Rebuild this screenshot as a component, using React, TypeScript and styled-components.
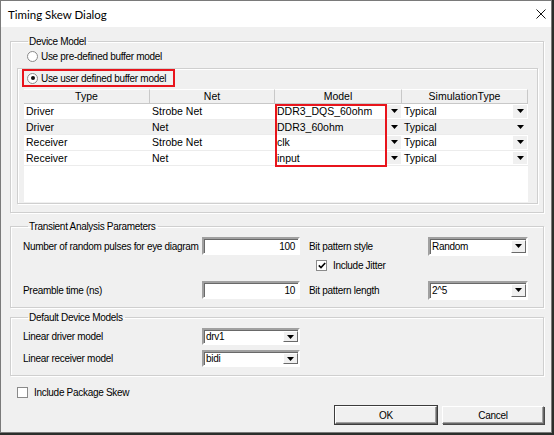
import React from 'react';
import styled, { createGlobalStyle, css } from 'styled-components';

const GlobalStyle = createGlobalStyle`
  html, body {
    margin: 0;
    padding: 0;
    background: #2b2e2b;
  }
  * {
    box-sizing: border-box;
  }
`;

const uiFont = `'Liberation Sans', Arial, sans-serif`;
const titleFont = `Lato, 'Liberation Sans', sans-serif`;

const Window = styled.div`
  width: 552px;
  height: 433px;
  border: 1px solid #7a7a7a;
  background: #f0f0f0;
  display: flex;
  flex-direction: column;
  font-family: ${uiFont};
  font-size: 10px;
  letter-spacing: -0.3px;
  color: #000;
`;

const TitleBar = styled.div`
  height: 26px;
  background: #fff;
  display: flex;
  align-items: center;
  justify-content: space-between;
  padding: 0 5px 0 7px;
  font-family: ${titleFont};
  font-size: 11.5px;
  letter-spacing: 0;
  flex-shrink: 0;
`;

const CloseIcon = () => (
  <svg width="10" height="10" viewBox="0 0 10 10">
    <path d="M0.5 0.5 L9.5 9.5 M9.5 0.5 L0.5 9.5" stroke="#111" strokeWidth="1" />
  </svg>
);

const Body = styled.div`
  flex: 1;
  display: flex;
  flex-direction: column;
  padding: 8px 7px 0 9px;
`;

const etched = css`
  border: 1px solid #cfcfcf;
  box-shadow: inset 1px 1px 0 #fff, 1px 1px 0 #fff;
`;

const Group = styled.fieldset<{ $gap?: number }>`
  ${etched};
  margin: ${({ $gap }) => $gap ?? 0}px 0 0 0;
  padding: 0 5px 8px 12px;
  min-width: 0;
`;

const Legend = styled.legend`
  padding: 0 2px 0 1px;
  margin-left: 5px;
  line-height: 13px;
`;

const RadioRow = styled.label<{ $indent?: number }>`
  display: flex;
  align-items: center;
  gap: 3px;
  height: 17px;
  margin-left: ${({ $indent }) => $indent ?? 0}px;
  cursor: default;
`;

const RadioDot = styled.span<{ $on?: boolean }>`
  width: 11px;
  height: 11px;
  border-radius: 50%;
  border: 1px solid #8a8a8a;
  background: #fff;
  display: flex;
  align-items: center;
  justify-content: center;
  &::after {
    content: '';
    width: 4px;
    height: 4px;
    border-radius: 50%;
    background: ${({ $on }) => ($on ? '#111' : 'transparent')};
  }
`;

const ModelBox = styled.div`
  ${etched};
  margin: 3px 0 0 -6px;
  padding: 0 8px 1px 6px;
  display: flex;
  flex-direction: column;
`;

const Highlight = styled.div`
  align-self: flex-start;
  border: 2px solid #e8141c;
  padding: 0 7px 0 3px;
  margin-left: -2px;
  height: 18px;
  display: flex;
  align-items: center;
`;

const Table = styled.div`
  margin-top: 2px;
  width: 504px;
  height: 113px;
  background: #fff;
  font-size: 10.5px;
  letter-spacing: 0;
  position: relative;
`;

const Row = styled.div<{ $head?: boolean; $shade?: boolean }>`
  display: grid;
  grid-template-columns: 126px 125px 127px 126px;
  height: ${({ $head }) => ($head ? 15 : 15.5)}px;
  background: ${({ $head, $shade }) => ($head || $shade ? '#f0f0f0' : '#fff')};
  border-bottom: 1px solid ${({ $head }) => ($head ? '#c8c8c8' : '#ececec')};
`;

const HeadCell = styled.div`
  display: flex;
  align-items: center;
  justify-content: center;
  border-right: 1px solid #c8c8c8;
  border-top: 1px solid #fff;
  line-height: 1;
`;

const Cell = styled.div`
  display: flex;
  align-items: center;
  padding-left: 2px;
  line-height: 1;
  overflow: hidden;
  white-space: nowrap;
`;

const ComboCell = styled.div`
  display: flex;
  align-items: stretch;
  line-height: 1;
  white-space: nowrap;
`;

const ComboText = styled.div`
  flex: 1;
  display: flex;
  align-items: center;
  padding-left: 2px;
`;

const CellButton = styled.div`
  width: 14px;
  background: #f0f0f0;
  display: flex;
  align-items: center;
  justify-content: center;
  margin: 1px 1px 1px 0;
`;

const Arrow = () => (
  <svg width="7" height="4" viewBox="0 0 7 4">
    <path d="M0 0 H7 L3.5 4 Z" fill="#000" />
  </svg>
);

const ModelMark = styled.div`
  position: absolute;
  left: 251px;
  top: 15px;
  width: 112px;
  height: 63px;
  border: 2px solid #e8141c;
  pointer-events: none;
`;

const Form = styled.div<{ $rows: string; $rowGap?: number }>`
  display: grid;
  grid-template-columns: 179px 98px 128px 100px;
  grid-template-rows: ${({ $rows }) => $rows};
  row-gap: ${({ $rowGap }) => $rowGap ?? 0}px;
  align-items: center;
  margin-top: 4px;
`;

const Label = styled.div<{ $indent?: number }>`
  padding-left: ${({ $indent }) => $indent ?? 0}px;
  white-space: nowrap;
`;

const sunken = css`
  border: 2px solid;
  border-color: #a0a0a0 #fff #fff #a0a0a0;
  box-shadow: inset 1px 1px 0 #696969;
  background: #fff;
`;

const TextBox = styled.div<{ $h: number }>`
  ${sunken};
  height: ${({ $h }) => $h}px;
  display: flex;
  align-items: center;
  justify-content: flex-end;
  padding: 0 3px;
`;

const Combo = styled.div<{ $h: number }>`
  ${sunken};
  height: ${({ $h }) => $h}px;
  display: flex;
  align-items: stretch;
`;

const ComboValue = styled.div`
  flex: 1;
  display: flex;
  align-items: center;
  padding-left: 2px;
`;

const ComboButton = styled.div`
  width: 15px;
  margin: 1px 0;
  background: #f0f0f0;
  border: 1px solid;
  border-color: #fff #696969 #696969 #fff;
  display: flex;
  align-items: center;
  justify-content: center;
`;

const CheckRow = styled.label<{ $indent?: number; $top?: number }>`
  display: flex;
  align-items: center;
  gap: 6px;
  padding-left: ${({ $indent }) => $indent ?? 0}px;
  margin-top: ${({ $top }) => $top ?? 0}px;
  align-self: start;
  white-space: nowrap;
`;

const Box = styled.span`
  width: 11px;
  height: 11px;
  border: 1px solid #8a8a8a;
  background: #fff;
  display: flex;
  align-items: center;
  justify-content: center;
`;

const Tick = () => (
  <svg width="8" height="7" viewBox="0 0 8 7">
    <path d="M0.8 3.4 L3 5.6 L7.2 1" stroke="#000" strokeWidth="1.6" fill="none" />
  </svg>
);

const Footer = styled.div`
  display: flex;
  flex-direction: column;
  margin-top: 11px;
`;

const Buttons = styled.div`
  display: flex;
  justify-content: flex-end;
  gap: 5px;
  margin-top: 8px;
`;

const Button = styled.button<{ $default?: boolean }>`
  width: 102px;
  height: 18px;
  font-family: ${uiFont};
  font-size: 10px;
  letter-spacing: -0.3px;
  background: #f0f0f0;
  padding: 0;
  border: 1px solid;
  border-color: #fff #696969 #696969 #fff;
  box-shadow: ${({ $default }) =>
    $default
      ? '0 0 0 1px #3c3c3c, inset -1px -1px 0 #a0a0a0'
      : 'inset -1px -1px 0 #a0a0a0, 1px 1px 0 #4a4a4a'};
`;

const rows = [
  { type: 'Driver', net: 'Strobe Net', model: 'DDR3_DQS_60ohm' },
  { type: 'Driver', net: 'Net', model: 'DDR3_60ohm' },
  { type: 'Receiver', net: 'Strobe Net', model: 'clk' },
  { type: 'Receiver', net: 'Net', model: 'input' },
];

export default function App() {
  return (
    <>
      <GlobalStyle />
      <Window>
        <TitleBar>
          <span>Timing Skew Dialog</span>
          <CloseIcon />
        </TitleBar>
        <Body>
          <Group>
            <Legend>Device Model</Legend>
            <RadioRow $indent={4}>
              <RadioDot />
              Use pre-defined buffer model
            </RadioRow>
            <ModelBox>
              <Highlight>
                <RadioRow>
                  <RadioDot $on />
                  Use user defined buffer model
                </RadioRow>
              </Highlight>
              <Table>
                <Row $head>
                  <HeadCell>Type</HeadCell>
                  <HeadCell>Net</HeadCell>
                  <HeadCell>Model</HeadCell>
                  <HeadCell>SimulationType</HeadCell>
                </Row>
                {rows.map((r, i) => (
                  <Row key={i} $shade={i === 1}>
                    <Cell>{r.type}</Cell>
                    <Cell>{r.net}</Cell>
                    <ComboCell>
                      <ComboText>{r.model}</ComboText>
                      <CellButton>
                        <Arrow />
                      </CellButton>
                    </ComboCell>
                    <ComboCell>
                      <ComboText>Typical</ComboText>
                      <CellButton>
                        <Arrow />
                      </CellButton>
                    </ComboCell>
                  </Row>
                ))}
                <ModelMark />
              </Table>
            </ModelBox>
          </Group>

          <Group $gap={7}>
            <Legend>Transient Analysis Parameters</Legend>
            <Form $rows="18px 26px 18px">
              <Label>Number of random pulses for eye diagram</Label>
              <TextBox $h={18}>100</TextBox>
              <Label $indent={9}>Bit pattern style</Label>
              <Combo $h={19}>
                <ComboValue>Random</ComboValue>
                <ComboButton>
                  <Arrow />
                </ComboButton>
              </Combo>
              <span />
              <span />
              <CheckRow $indent={16} $top={5}>
                <Box>
                  <Tick />
                </Box>
                Include Jitter
              </CheckRow>
              <span />
              <Label>Preamble time (ns)</Label>
              <TextBox $h={18}>10</TextBox>
              <Label $indent={9}>Bit pattern length</Label>
              <Combo $h={19}>
                <ComboValue>2^5</ComboValue>
                <ComboButton>
                  <Arrow />
                </ComboButton>
              </Combo>
            </Form>
          </Group>

          <Group $gap={3}>
            <Legend>Default Device Models</Legend>
            <Form $rows="17px 17px" $rowGap={5}>
              <Label>Linear driver model</Label>
              <Combo $h={17}>
                <ComboValue>drv1</ComboValue>
                <ComboButton>
                  <Arrow />
                </ComboButton>
              </Combo>
              <span />
              <span />
              <Label>Linear receiver model</Label>
              <Combo $h={17}>
                <ComboValue>bidi</ComboValue>
                <ComboButton>
                  <Arrow />
                </ComboButton>
              </Combo>
            </Form>
          </Group>

          <Footer>
            <CheckRow $indent={7}>
              <Box />
              Include Package Skew
            </CheckRow>
            <Buttons>
              <Button $default>OK</Button>
              <Button>Cancel</Button>
            </Buttons>
          </Footer>
        </Body>
      </Window>
    </>
  );
}
